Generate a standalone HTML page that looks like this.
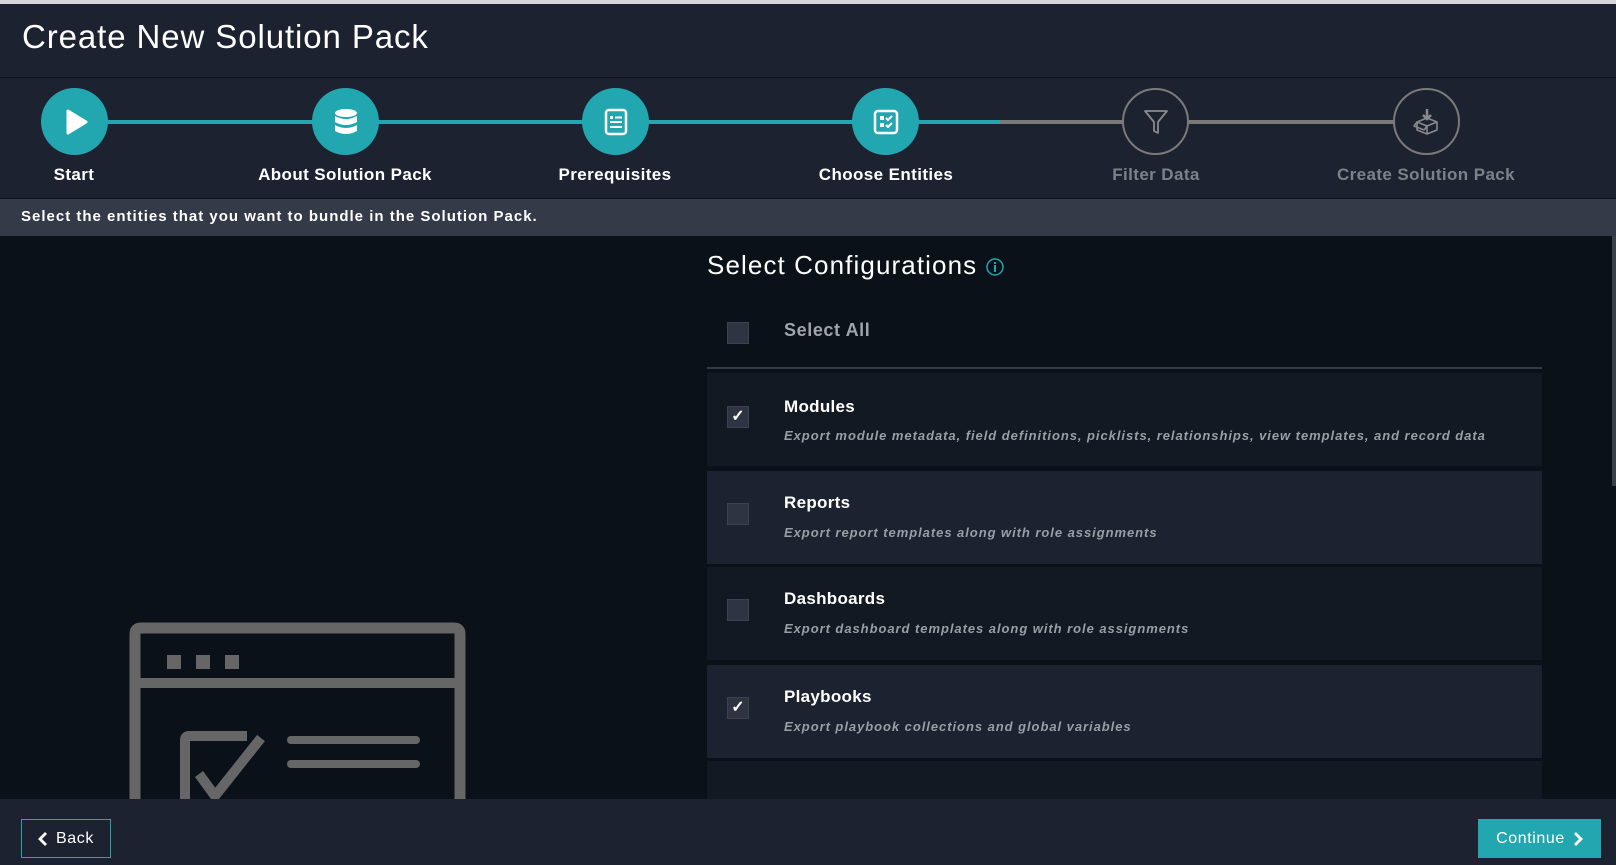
<!DOCTYPE html>
<html><head><meta charset="utf-8"><style>
*{margin:0;padding:0;box-sizing:border-box}
body{width:1616px;height:865px;overflow:hidden;background:#0b1119;font-family:"Liberation Sans",sans-serif;position:relative;color:#fff}
.abs{position:absolute}
.hdr{left:0;top:0;width:1616px;height:78px;background:#1c2230;border-top:4px solid #d5d7da;border-bottom:1px solid #0e131b}
.hdr h1{position:absolute;left:22px;top:14px;font-size:33px;font-weight:normal;color:#fff;letter-spacing:.9px}
.step{left:0;top:78px;width:1616px;height:121px;background:#1c2230;border-bottom:1px solid #0e131b}
.line{height:4px;top:120px}
.circ{width:67px;height:67px;border-radius:50%;top:88px;display:flex;align-items:center;justify-content:center}
.on{background:#22a6b0}
.off{border:2px solid #7a7a7a;background:#1c2230}
.lbl{top:165px;font-size:17px;font-weight:bold;letter-spacing:.4px;transform:translateX(-50%);white-space:nowrap}
.info{left:0;top:199px;width:1616px;height:37px;background:#343a48;font-size:15px;font-weight:bold;padding:9px 0 0 21px;letter-spacing:1px}
.row{left:707px;width:835px;height:93px}
.cb{left:20px;width:22px;height:22px;background:#2e3442;border:1px solid #3c4250;font-size:16px;line-height:20px;text-align:center;font-weight:bold}
.tt{left:77px;font-size:17px;font-weight:bold;letter-spacing:.3px}
.ds{left:77px;font-size:13px;font-style:italic;font-weight:bold;color:#9a9ea6;letter-spacing:.95px}
.foot{left:0;top:799px;width:1616px;height:66px;background:#1c2230}
.btn{height:39px;top:819px;font-size:16px;letter-spacing:.6px;display:flex;align-items:center;justify-content:center;gap:8px}
</style></head><body>
<div class="abs hdr"><h1>Create New Solution Pack</h1></div>
<div class="abs step"></div>
<div class="abs line" style="left:74px;width:926px;background:#22a6b0"></div>
<div class="abs line" style="left:1000px;width:426px;background:#7a7a7a"></div>
<div class="abs circ on" style="left:41px"><svg width="30" height="30" viewBox="0 0 30 30"><path d="M8 4 L26 15 L8 26 Z" fill="#fff" stroke="#fff" stroke-width="3" stroke-linejoin="round"/></svg></div>
<div class="abs circ on" style="left:312px"><svg width="26" height="28" viewBox="0 0 26 28"><ellipse cx="13" cy="5" rx="11" ry="4" fill="#fff"/><path d="M2 8 Q13 14 24 8 V14 Q13 20 2 14Z M2 17 Q13 23 24 17 V23 Q13 29 2 23Z" fill="#fff"/></svg></div>
<div class="abs circ on" style="left:582px"><svg width="26" height="28" viewBox="0 0 26 28"><rect x="3" y="2" width="20" height="24" rx="3" fill="none" stroke="#fff" stroke-width="2.5"/><rect x="7" y="8" width="3" height="3" fill="#fff"/><rect x="12" y="8.5" width="7" height="2" fill="#fff"/><rect x="7" y="13" width="12" height="2" fill="#fff"/><rect x="7" y="18" width="12" height="2" fill="#fff"/></svg></div>
<div class="abs circ on" style="left:852px"><svg width="26" height="26" viewBox="0 0 26 26"><rect x="2" y="2" width="22" height="22" rx="3" fill="none" stroke="#fff" stroke-width="2.5"/><rect x="7" y="7" width="4" height="4" fill="#fff"/><rect x="7" y="14" width="4" height="4" fill="#fff"/><path d="M13 9l2 2 4-4M13 16l2 2 4-4" stroke="#fff" stroke-width="2" fill="none"/></svg></div>
<div class="abs circ off" style="left:1122px"><svg width="26" height="28" viewBox="0 0 26 28"><path d="M2 3 H24 L15 14 V25 L11 23 V14 Z" fill="none" stroke="#8a8a8a" stroke-width="1.8" stroke-linejoin="round"/></svg></div>
<div class="abs circ off" style="left:1393px"><svg width="28" height="28" viewBox="0 0 28 28"><path d="M14 1 V11 M10 7 L14 11 L18 7" stroke="#8a8a8a" stroke-width="2.5" fill="none"/><path d="M4 14 L14 10 L24 14 L24 22 L14 26 L4 22 Z M4 14 L14 18 L24 14 M14 18 V26 M4 14 L1 18 L11 22 L14 18" fill="none" stroke="#8a8a8a" stroke-width="1.6" stroke-linejoin="round"/></svg></div>
<div class="abs lbl" style="left:74px">Start</div>
<div class="abs lbl" style="left:345px">About Solution Pack</div>
<div class="abs lbl" style="left:615px">Prerequisites</div>
<div class="abs lbl" style="left:886px">Choose Entities</div>
<div class="abs lbl" style="left:1156px;color:#7d828a">Filter Data</div>
<div class="abs lbl" style="left:1426px;color:#7d828a">Create Solution Pack</div>
<div class="abs info">Select the entities that you want to bundle in the Solution Pack.</div>

<svg class="abs" style="left:125px;top:618px" width="345" height="181" viewBox="0 0 345 181"><path d="M10 181 V16 Q10 10 16 10 H329 Q335 10 335 16 V181" fill="none" stroke="#666" stroke-width="11"/><rect x="10" y="60" width="325" height="10" fill="#666"/><rect x="42" y="37" width="14" height="14" fill="#666"/><rect x="71" y="37" width="14" height="14" fill="#666"/><rect x="100" y="37" width="14" height="14" fill="#666"/><path d="M60 181 V122 Q60 118 64 118 H122" fill="none" stroke="#666" stroke-width="10"/><path d="M74 156 L90 178 L136 120" fill="none" stroke="#666" stroke-width="10"/><rect x="162" y="118" width="133" height="8" rx="4" fill="#666"/><rect x="162" y="142" width="133" height="8" rx="4" fill="#666"/></svg>

<div class="abs" style="left:707px;top:250px;font-size:26px;letter-spacing:1.1px">Select Configurations <svg width="18" height="18" viewBox="0 0 18 18" style="vertical-align:-2px"><circle cx="9" cy="9" r="8" fill="none" stroke="#22a6b0" stroke-width="1.5"/><rect x="8" y="7" width="2" height="7" fill="#22a6b0"/><rect x="8" y="4" width="2" height="2" fill="#22a6b0"/></svg></div>
<div class="abs cb" style="left:727px;top:322px"></div>
<div class="abs" style="left:784px;top:320px;font-size:18px;font-weight:bold;letter-spacing:.6px;color:#a0a4ab">Select All</div>
<div class="abs" style="left:707px;top:367px;width:835px;height:2px;background:#343a48"></div>

<div class="abs row" style="top:373px;background:#131923"><div class="abs cb" style="top:33px">✓</div><div class="abs tt" style="top:24px">Modules</div><div class="abs ds" style="top:55px">Export module metadata, field definitions, picklists, relationships, view templates, and record data</div></div>
<div class="abs row" style="top:471px;background:#1c2230"><div class="abs cb" style="top:32px"></div><div class="abs tt" style="top:22px">Reports</div><div class="abs ds" style="top:54px">Export report templates along with role assignments</div></div>
<div class="abs row" style="top:567px;background:#131923"><div class="abs cb" style="top:32px"></div><div class="abs tt" style="top:22px">Dashboards</div><div class="abs ds" style="top:54px">Export dashboard templates along with role assignments</div></div>
<div class="abs row" style="top:665px;background:#1c2230"><div class="abs cb" style="top:32px">✓</div><div class="abs tt" style="top:22px">Playbooks</div><div class="abs ds" style="top:54px">Export playbook collections and global variables</div></div>
<div class="abs row" style="top:761px;height:38px;background:#131923"></div>
<div class="abs" style="left:1612px;top:236px;width:4px;height:250px;background:#3a3f4a"></div>

<div class="abs foot"></div>
<div class="abs btn" style="left:21px;width:90px;border:1px solid #22a6b0;background:#1c2230"><svg width="10" height="14" viewBox="0 0 10 14"><path d="M8 1 L2 7 L8 13" fill="none" stroke="#fff" stroke-width="2.8"/></svg>Back</div>
<div class="abs btn" style="left:1478px;width:123px;background:#22a6b0">Continue<svg width="10" height="14" viewBox="0 0 10 14"><path d="M2 1 L8 7 L2 13" fill="none" stroke="#fff" stroke-width="2.8"/></svg></div>
</body></html>
